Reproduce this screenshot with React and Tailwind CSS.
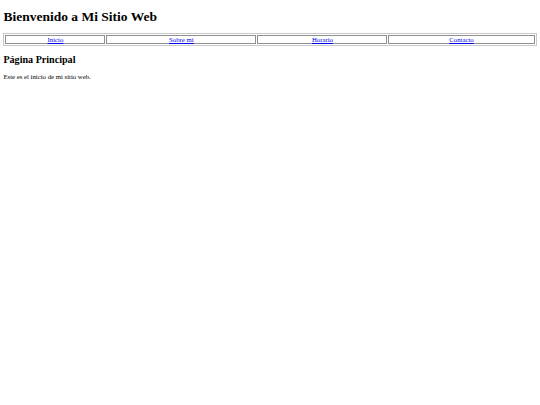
import React from 'react';

const links = [
  { label: 'Inicio', w: 'w-[100px]' },
  { label: 'Sobre mi', w: 'w-[150px]' },
  { label: 'Horario', w: 'w-[130px]' },
  { label: 'Contacto', w: 'w-auto' },
];

const App = () => {
  return (
    <div className="min-h-screen bg-white px-[3.4px] py-[0.1px] text-black font-['Liberation_Serif',serif]">
      <h1 className="mt-[8.6px] mb-[8.6px] text-[13.5px] leading-[15.5px] font-bold">
        Bienvenido a Mi Sitio Web
      </h1>
      <table className="w-full border border-[#c8c8c8] border-separate border-spacing-[1px] table-fixed">
        <tbody>
          <tr>
            {links.map((l) => (
              <td
                key={l.label}
                className={`${l.w} border border-[#909090] text-center text-[6.75px] leading-[7px] p-0`}
              >
                <a href="#" className="text-[#0000ee] underline">
                  {l.label}
                </a>
              </td>
            ))}
          </tr>
        </tbody>
      </table>
      <h2 className="mt-[8.4px] mb-[7.6px] text-[10.1px] leading-[11.6px] font-bold">
        Página Principal
      </h2>
      <p className="text-[6.75px] leading-[7.8px]">Este es el inicio de mi sitio web.</p>
    </div>
  );
};

export default App;
